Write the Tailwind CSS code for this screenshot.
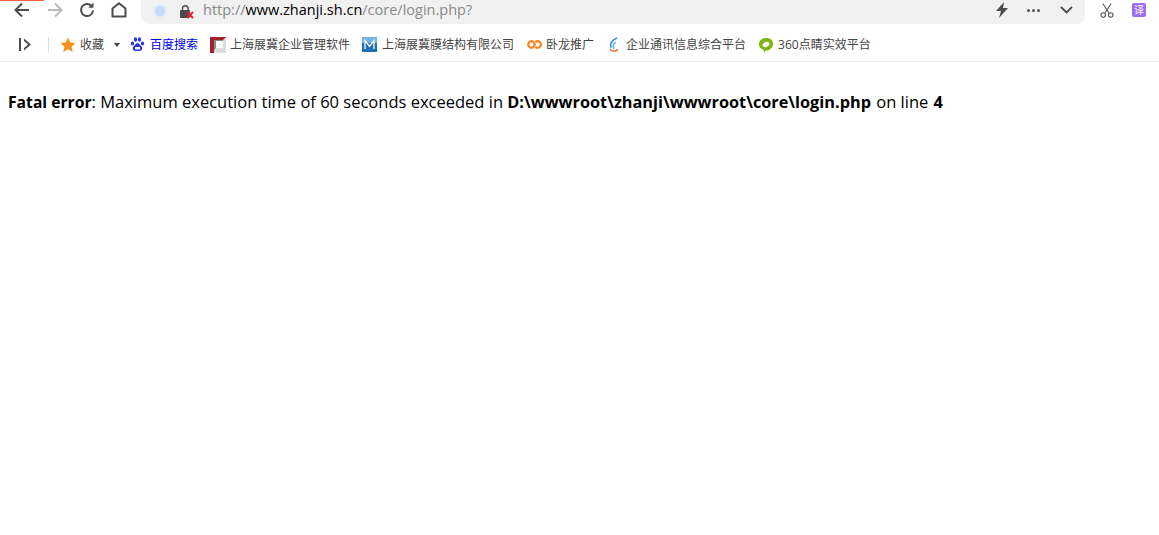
<!DOCTYPE html>
<html lang="en">
<head>
    <meta charset="UTF-8">
    <title>login.php</title>
    <script src="https://cdn.jsdelivr.net/npm/@tailwindcss/browser@4"></script>
</head>
<body class="bg-white h-[535px] overflow-hidden font-['Open_Sans','Noto_Sans_CJK_SC',sans-serif]">
    <!-- Top progress line -->
    <div class="absolute left-0 top-0 w-[44px] h-px bg-[#f7623c]"></div>

    <!-- Toolbar -->
    <div class="flex items-start h-[30px]">
        <div class="flex items-center h-[20px] w-[141px] shrink-0">
            <svg class="ml-[14px] w-[16px] h-[16px]" viewBox="0 0 16 16" fill="none" stroke="#4d4d4d" stroke-width="2"><path d="M15 8H2M8 1.500 1.500 8 8 14.500"/></svg>
            <svg class="ml-[17px] w-[16px] h-[16px]" viewBox="0 0 16 16" fill="none" stroke="#b9b9b9" stroke-width="2"><path d="M1 8h13M8 1.500 14.500 8 8 14.500"/></svg>
            <svg class="ml-[16px] w-[16px] h-[16px]" viewBox="0 0 16 16" fill="none" stroke="#4d4d4d" stroke-width="2"><path d="M14 8.500a6 6 0 1 1-1.600-4.600"/><path d="M14.500 .5v5.200H9.300" fill="#4d4d4d" stroke="none"/></svg>
            <svg class="ml-[16px] w-[16px] h-[16px]" viewBox="0 0 16 16" fill="none" stroke="#4d4d4d" stroke-width="2"><path d="M1.500 14.500V6.500L8 1.200l6.500 5.300v8z" stroke-linejoin="round"/></svg>
        </div>
        <div class="flex items-center w-[944px] h-[24px] bg-[#f1f1f1] rounded-br-lg rounded-bl-lg shrink-0">
            <div class="ml-[12px] mb-[3px] w-[14px] h-[14px] rounded-full bg-[#c4dafc] border-2 border-[#e2ecfb] shrink-0"></div>
            <svg class="ml-[12px] mb-[2px] w-[15px] h-[15px] shrink-0" viewBox="0 0 15 15"><path d="M3.500 6V4.500a2.800 2.800 0 0 1 5.600 0V6" fill="none" stroke="#4a4a4a" stroke-width="1.400"/><rect x="1" y="6" width="10" height="8" rx="1" fill="#4a4a4a"/><path d="M8 8l6 6M14 8l-6 6" stroke="#e0262b" stroke-width="2"/></svg>
            <div class="ml-[9px] mb-[4px] text-[14.5px] leading-[20px] text-[#8a8a8a] whitespace-nowrap">http://<span class="text-black">www.zhanji.sh.cn</span>/core/login.php?</div>
            <svg class="ml-auto mb-[4px] w-[14px] h-[16px]" viewBox="0 0 14 16"><path d="M9 0 1 9h5l-2 7 9-10H8z" fill="#4d4d4d"/></svg>
            <div class="ml-[18px] mb-[4px] flex gap-[2px]">
                <div class="w-[3px] h-[3px] rounded-full bg-[#555555]"></div>
                <div class="w-[3px] h-[3px] rounded-full bg-[#555555]"></div>
                <div class="w-[3px] h-[3px] rounded-full bg-[#555555]"></div>
            </div>
            <svg class="ml-[20px] mr-[12px] mb-[4px] w-[13px] h-[8px]" viewBox="0 0 13 8" fill="none" stroke="#4d4d4d" stroke-width="1.800"><path d="M1 1l5.500 5.500L12 1"/></svg>
        </div>
        <svg class="ml-[15px] mt-[3px] w-[14px] h-[15px]" viewBox="0 0 15 16" fill="none" stroke="#4d4d4d" stroke-width="1.100"><path d="M3 .5l6.500 10M12 .5 5.500 10.500"/><circle cx="3.500" cy="12.800" r="2.400"/><circle cx="11.500" cy="12.800" r="2.400"/></svg>
        <div class="ml-[18px] mt-[3px] w-[14px] h-[14px] rounded-[2px] bg-[#9b6cf5] text-white text-[10px] leading-[14px] text-center font-['Noto_Sans_CJK_SC',sans-serif]">译</div>
    </div>

    <!-- Bookmarks bar -->
    <div class="flex items-center h-[32px] pb-[2px] border-b border-[#ebebeb] text-[12px] text-[#444444] whitespace-nowrap">
        <svg class="ml-[19px] w-[12px] h-[13px]" viewBox="0 0 12 13" fill="#4d4d4d"><rect x="0" y="0" width="2" height="13"/><path d="M5 .5 12 6.500 5 12.500V10L9 6.500 5 3z"/></svg>
        <div class="ml-[17px] w-px h-[16px] bg-[#dddddd]"></div>
        <svg class="ml-[11px] w-[16px] h-[16px]" viewBox="0 0 16 16"><path d="M8 .5l2.300 5 5.200.6-3.900 3.600 1.100 5.300L8 12.300 3.300 15l1.100-5.300L.5 6.100l5.200-.6z" fill="#f6931c"/></svg>
        <span class="ml-[4px]">收藏</span>
        <div class="ml-[10px] w-0 h-0 border-x-[3.500px] border-x-transparent border-t-[4px] border-t-[#444444]"></div>
        <svg class="ml-[10px] w-[15px] h-[15px]" viewBox="0 0 15 15" fill="#2932e1"><ellipse cx="2.500" cy="6.500" rx="1.600" ry="2"/><ellipse cx="5.500" cy="2.500" rx="1.600" ry="2.200"/><ellipse cx="9.500" cy="2.500" rx="1.600" ry="2.200"/><ellipse cx="12.500" cy="6.500" rx="1.600" ry="2"/><path d="M7.500 6C5.500 6 5 8.500 3.500 9.500 2 11 3 14 5.500 14h4c2.500 0 3.500-3 2-4.500C10 8.500 9.500 6 7.500 6z"/><rect x="5" y="10" width="5" height="2.500" fill="#ffffff"/></svg>
        <span class="ml-[5px] text-[#0000ee]">百度搜索</span>
        <svg class="ml-[12px] w-[16px] h-[16px]" viewBox="0 0 16 16"><rect width="16" height="16" fill="#a81f2c"/><rect x="4" y="3" width="12" height="10" fill="#8a8a8a"/><path d="M4 16V13l3-3h6V3l3-3v16z" fill="#dddddd"/><rect x="6" y="4" width="7" height="7" fill="#ffffff"/></svg>
        <span class="ml-[4px]">上海展冀企业管理软件</span>
        <svg class="ml-[12px] w-[15px] h-[15px]" viewBox="0 0 15 15"><rect width="15" height="15" fill="#1f6fb5"/><rect width="15" height="6" fill="#6fb2e4"/><path d="M3 12V3.500l4.500 6 4.500-6V12" fill="none" stroke="#ffffff" stroke-width="1.300"/></svg>
        <span class="ml-[5px]">上海展冀膜结构有限公司</span>
        <svg class="ml-[13px] w-[16px] h-[11px]" viewBox="0 0 16 11" fill="none" stroke="#f58a2c" stroke-width="2.400"><circle cx="4.500" cy="5.500" r="3.200"/><path d="M8.500 3.200a3.200 3.200 0 1 1 0 4.600"/></svg>
        <span class="ml-[3px]">卧龙推广</span>
        <svg class="ml-[13px] w-[14px] h-[16px]" viewBox="0 0 14 16" fill="none" stroke-width="1.500"><path d="M10 1C5 3 3 7 4 11" stroke="#3f8fe0"/><path d="M9 5C6 7 6 10 7 12" stroke="#57b5ee"/><path d="M3 12c2 3 6 3 8 0" stroke="#ee7a3a"/></svg>
        <span class="ml-[5px]">企业通讯信息综合平台</span>
        <svg class="ml-[12px] w-[16px] h-[16px]" viewBox="0 0 16 16"><path d="M8 1c4.500 0 7.500 2.500 7 6.500-.5 4-4 6-7 6l-2 2V13C2 12 .5 9.500 1 6.500 1.500 3 4.500 1 8 1z" fill="#7fb512"/><ellipse cx="8" cy="7.500" rx="3.500" ry="2.500" fill="#ffffff" transform="rotate(-25 8 7.500)"/></svg>
        <span class="ml-[4px]">360点睛实效平台</span>
    </div>

    <!-- PHP error -->
    <div class="pl-[8px] pt-[28px] text-[16.5px] leading-[24px] text-black whitespace-nowrap"><b class="text-[15.700px]">Fatal error</b>: Maximum execution time of 60 seconds exceeded in <b class="text-[16.300px]">D:\wwwroot\zhanji\wwwroot\core\login.php</b> <span class="pl-px">on line</span> <b class="pl-px text-[16.300px]">4</b></div>
</body>
</html>
